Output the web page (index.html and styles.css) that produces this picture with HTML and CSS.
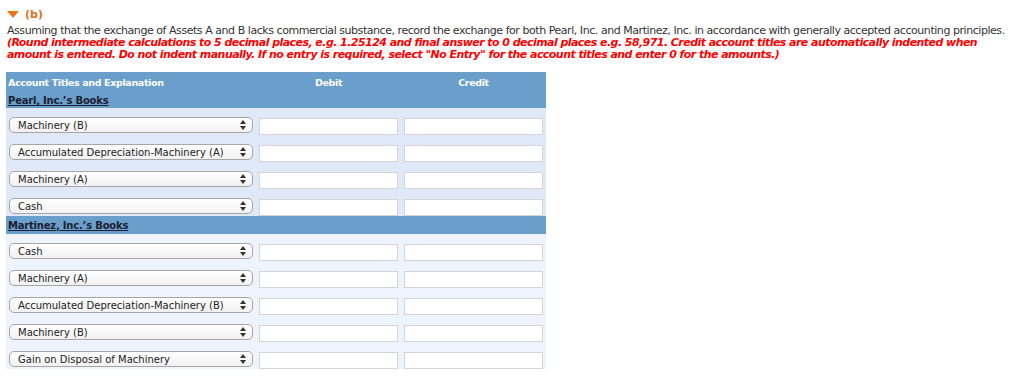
FILE: index.html
```html
<html lang="en">
<head>
    <meta charset="UTF-8">
    <title>Exchange Entry</title>
    <link rel="stylesheet" href="styles.css">
</head>
<body>

    <div class="part-title">
        <svg class="toggle" width="12" height="7" viewBox="0 0 12 7"><polygon points="0,0 12,0 6,7" fill="#e8751a"/></svg>
        <span>(b)</span>
    </div>

    <p class="question">Assuming that the exchange of Assets A and B lacks commercial substance, record the exchange for both Pearl, Inc. and Martinez, Inc. in accordance with generally accepted accounting principles.</p>
    <p class="note">(Round intermediate calculations to 5 decimal places, e.g. 1.25124 and final answer to 0 decimal places e.g. 58,971. Credit account titles are automatically indented when<br>amount is entered. Do not indent manually. If no entry is required, select "No Entry" for the account titles and enter 0 for the amounts.)</p>

    <table class="journal">
        <thead>
            <tr class="head-row">
                <th class="col-title">Account Titles and Explanation</th>
                <th class="col-amt">Debit</th>
                <th class="col-amt">Credit</th>
            </tr>
            <tr class="book-row">
                <td colspan="3"><span class="book">Pearl, Inc.’s Books</span></td>
            </tr>
        </thead>
        <tbody id="pearl" class="section-a"></tbody>
        <tbody>
            <tr class="book-row band">
                <td colspan="3"><span class="book">Martinez, Inc.’s Books</span></td>
            </tr>
        </tbody>
        <tbody id="martinez" class="section-b"></tbody>
    </table>

<script>
const pearl = ["Machinery (B)", "Accumulated Depreciation-Machinery (A)", "Machinery (A)", "Cash"];
const martinez = ["Cash", "Machinery (A)", "Accumulated Depreciation-Machinery (B)", "Machinery (B)", "Gain on Disposal of Machinery"];

function fillRows(id, accounts) {
    const body = document.getElementById(id);
    accounts.forEach(name => {
        const row = `
            <tr class="entry">
                <td><div class="pick"><span>${name}</span>
                    <svg width="6" height="10" viewBox="0 0 6 10"><polygon points="3,0 6,4 0,4" fill="#333"/><polygon points="0,6 6,6 3,10" fill="#333"/></svg>
                </div></td>
                <td><input type="text" class="amount"></td>
                <td><input type="text" class="amount"></td>
            </tr>`;
        body.insertAdjacentHTML("beforeend", row);
    });
}

fillRows("pearl", pearl);
fillRows("martinez", martinez);
</script>

</body>
</html>
```

FILE: styles.css
```css
body {
    font-family: 'DejaVu Sans', Verdana, sans-serif;
    font-size: 11px;
    color: #333;
    background: #fff;
    margin: 0;
    padding: 7px 0 0 7px;
}

.part-title {
    display: flex;
    align-items: center;
    gap: 6px;
    color: #e0701e;
    font-weight: bold;
    height: 14px;
}

.toggle {
    margin-top: 1px;
}

.question {
    margin: 3px 0 0 0;
    line-height: 13px;
    letter-spacing: -0.45px;
    white-space: nowrap;
}

.note {
    margin: 0;
    color: #f00;
    font-weight: bold;
    font-style: italic;
    line-height: 12px;
    letter-spacing: -0.55px;
    white-space: nowrap;
}

.journal {
    margin: 11px 0 0 -1px;
    width: 540px;
    border-collapse: collapse;
    font-size: 10px;
}

.head-row th {
    background: #6a9ecb;
    color: #fff;
    font-weight: bold;
    font-size: 9.5px;
    letter-spacing: -0.35px;
    padding: 5px 2px 0 2px;
    height: 21px;
    vertical-align: top;
}

.col-title {
    text-align: left;
    width: 246px;
}

.col-amt {
    text-align: center;
    width: 141px;
}

.book-row td {
    background: #6a9ecb;
    padding: 0 2px;
    height: 15px;
    letter-spacing: -0.2px;
}

.book-row.band td {
    height: 18px;
}

.book {
    color: #1c2030;
    font-weight: bold;
    text-decoration: underline;
}

.section-a td {
    background: #dfe9f7;
}

.section-b td {
    background: #eef4fd;
}

.entry td {
    height: 27px;
    padding: 9px 3px 0 3px;
    vertical-align: top;
    box-sizing: border-box;
}

.pick {
    display: flex;
    align-items: center;
    justify-content: space-between;
    height: 14px;
    padding: 0 6px 0 8px;
    border: 1px solid #a6a6a6;
    border-radius: 5px;
    background: linear-gradient(#ffffff, #f1f1f1);
    color: #222;
}

.amount {
    display: block;
    width: 100%;
    box-sizing: border-box;
    height: 17px;
    border: 1px solid #d4d4d4;
    background: #fff;
    margin-top: 1px;
}
```
